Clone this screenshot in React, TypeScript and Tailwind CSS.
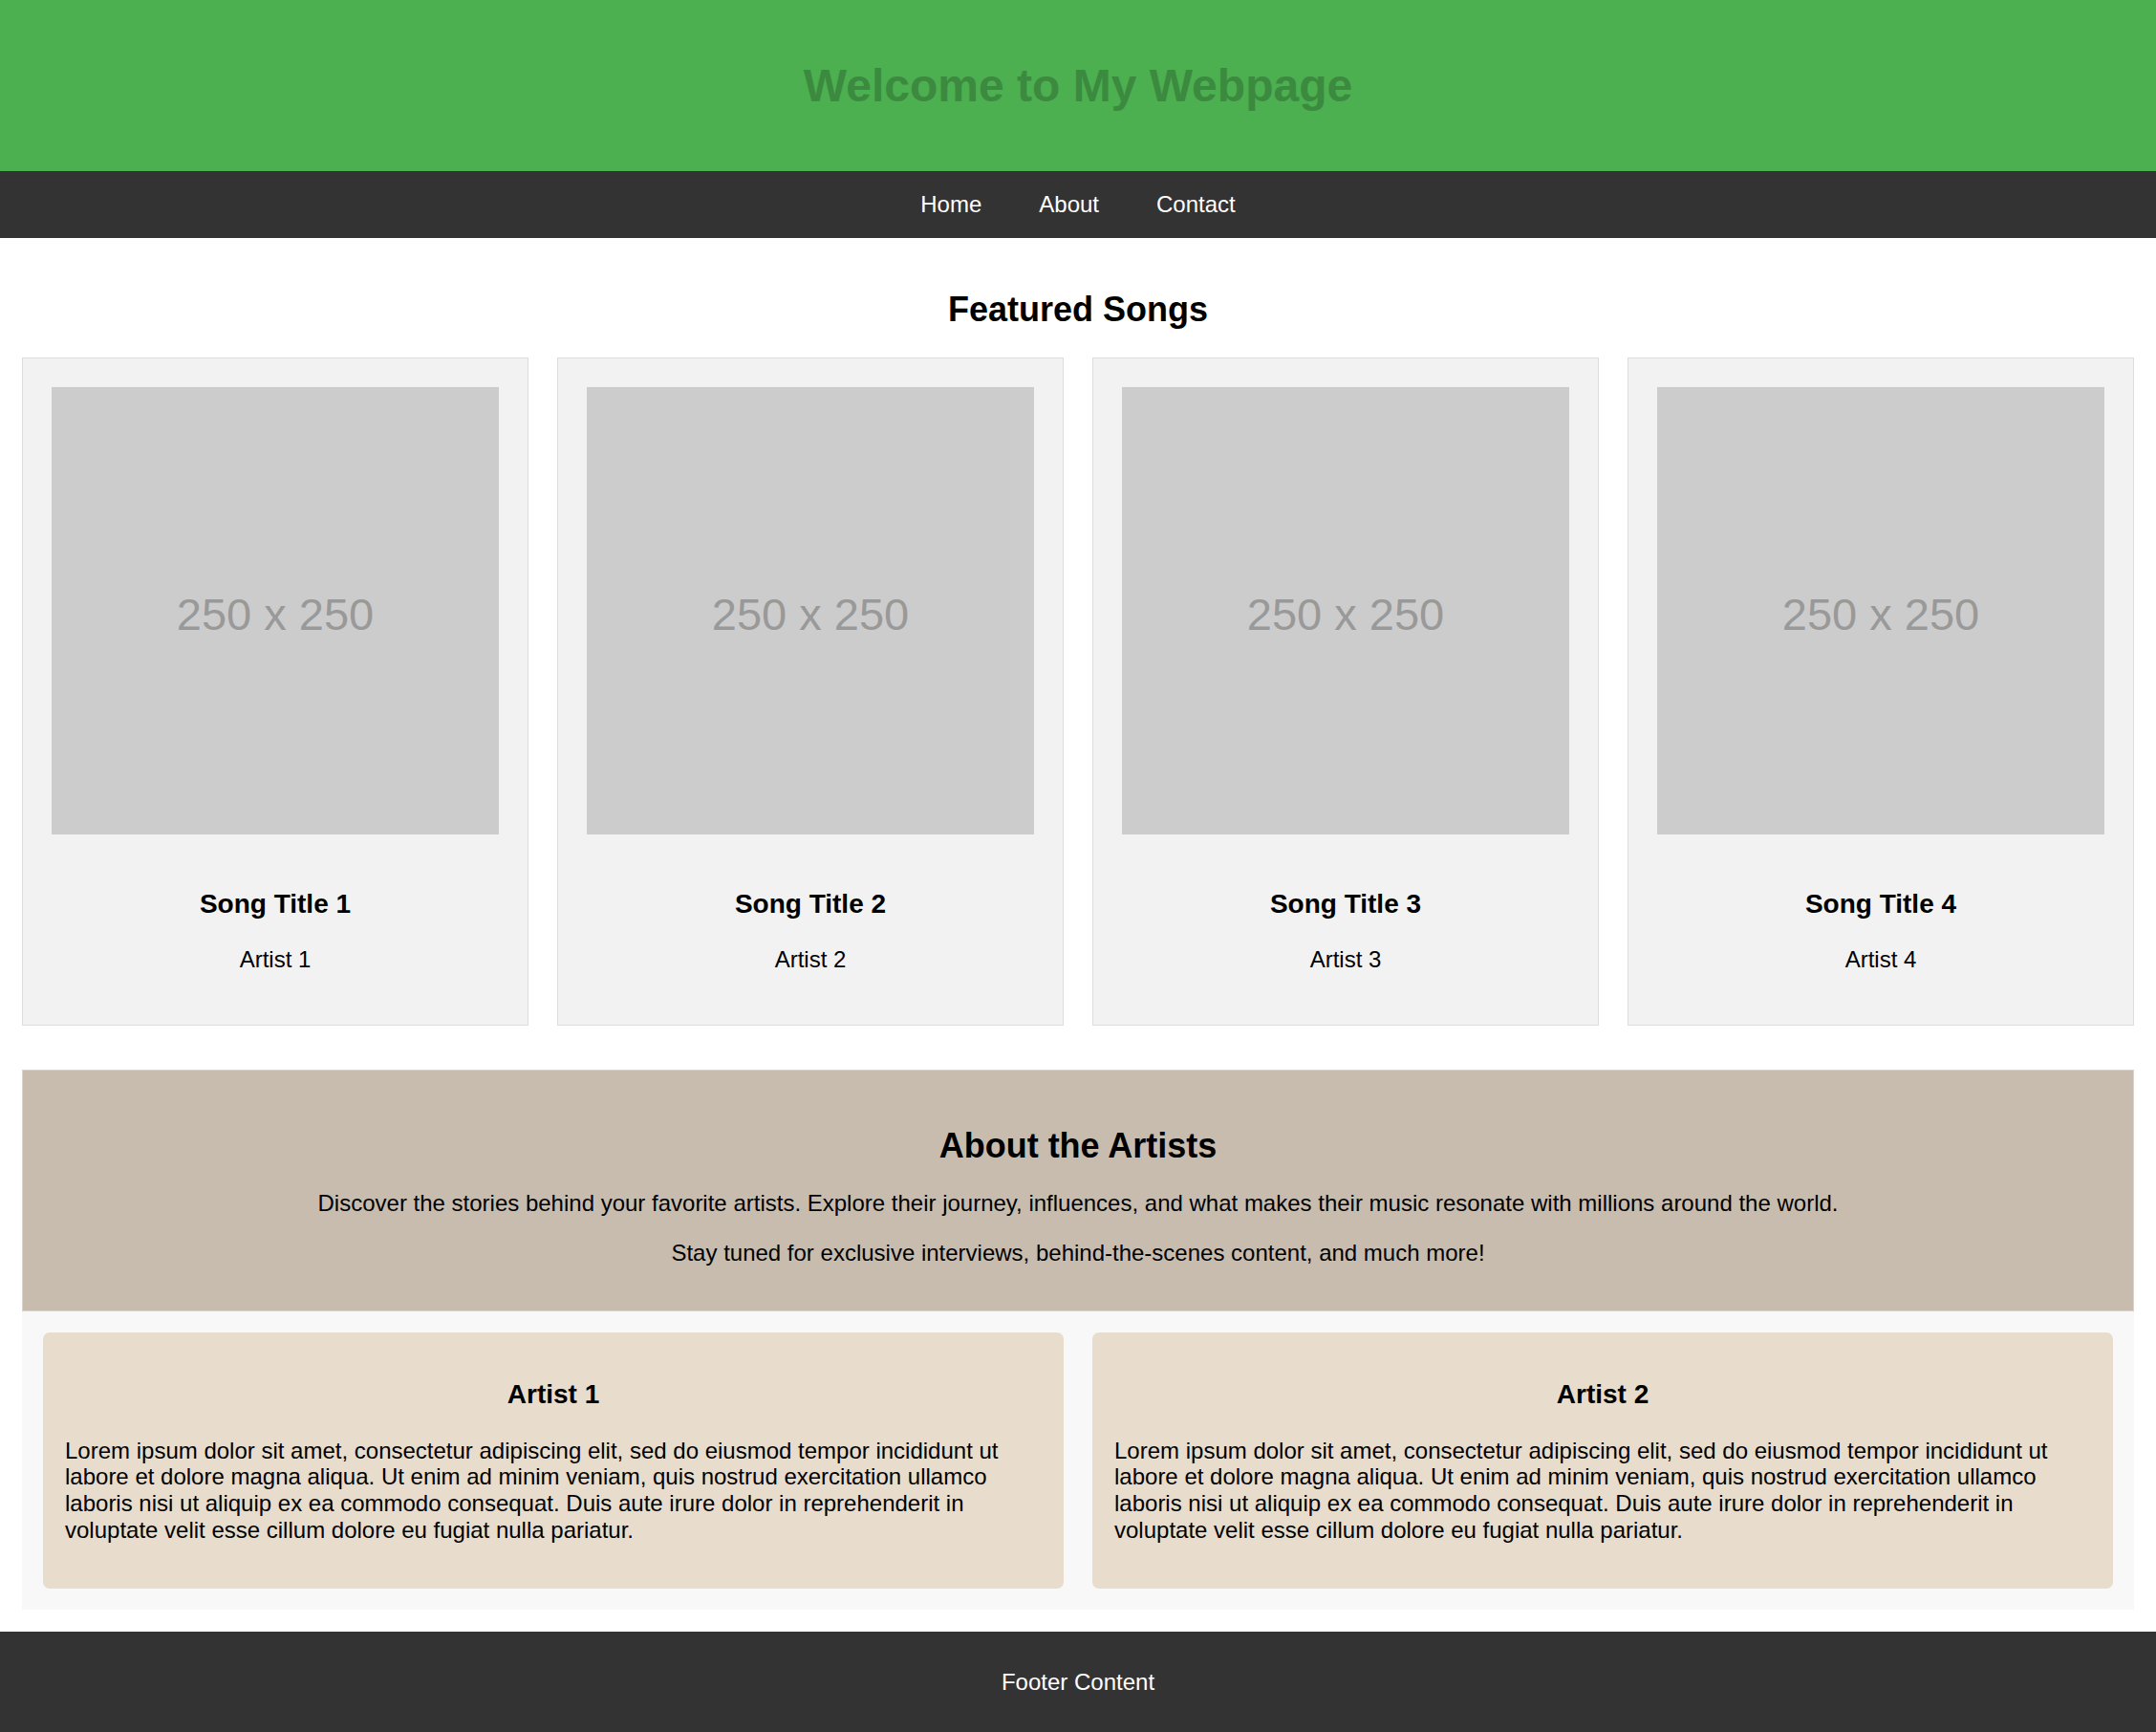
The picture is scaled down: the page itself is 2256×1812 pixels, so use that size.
const songs = [
  { title: 'Song Title 1', artist: 'Artist 1' },
  { title: 'Song Title 2', artist: 'Artist 2' },
  { title: 'Song Title 3', artist: 'Artist 3' },
  { title: 'Song Title 4', artist: 'Artist 4' },
]

const lorem =
  'Lorem ipsum dolor sit amet, consectetur adipiscing elit, sed do eiusmod tempor incididunt ut labore et dolore magna aliqua. Ut enim ad minim veniam, quis nostrud exercitation ullamco laboris nisi ut aliquip ex ea commodo consequat. Duis aute irure dolor in reprehenderit in voluptate velit esse cillum dolore eu fugiat nulla pariatur.'

function SongCard({ title, artist }: { title: string; artist: string }) {
  return (
    <div className="border border-[#ddd] bg-[#f2f2f2] px-[30px] pt-[30px] pb-[54px] text-center">
      {/* placeholder image */}
      <div className="flex h-[468px] w-full items-center justify-center bg-[#cccccc] pt-[6px] text-[47px] leading-none text-[#999]">
        250 x 250
      </div>
      <h3 className="mt-[57px] text-[28px] font-bold leading-[32px]">{title}</h3>
      <p className="mt-[28px] text-[24px] leading-[1.15]">{artist}</p>
    </div>
  )
}

function ArtistCard({ name }: { name: string }) {
  return (
    <div className="rounded-[7px] bg-[#e8dccc] px-[23px] pt-[49px] pb-[48px]">
      <h3 className="text-center text-[28px] font-bold leading-[32px]">{name}</h3>
      <p className="mt-[29px] text-[24px] leading-[1.15]">{lorem}</p>
    </div>
  )
}

export default function App() {
  return (
    <div className="min-h-[1812px] bg-white font-['Liberation_Sans',Arial,sans-serif] text-black">
      {/* ── HEADER ── */}
      <header className="flex h-[179px] items-center justify-center bg-[#4caf50]">
        <h1 className="text-[48px] font-bold leading-none text-[#3c8a3f]">Welcome to My Webpage</h1>
      </header>

      {/* ── NAV ── */}
      <nav className="flex h-[70px] items-center justify-center gap-[60px] bg-[#333] text-[24px] text-white">
        <a href="#">Home</a>
        <a href="#">About</a>
        <a href="#">Contact</a>
      </nav>

      {/* ── FEATURED SONGS ── */}
      <section className="px-[23px] pt-[54px]">
        <h2 className="text-center text-[36px] font-bold leading-[41px]">Featured Songs</h2>
        <div className="mt-[30px] grid grid-cols-4 gap-[30px]">
          {songs.map((s) => (
            <SongCard key={s.title} title={s.title} artist={s.artist} />
          ))}
        </div>
      </section>

      {/* ── ABOUT ── */}
      <section className="mx-[23px] mt-[46px]">
        <div className="border border-[#dcd4ca] bg-[#c8bcae] pt-[58px] pb-[46px] text-center">
          <h2 className="text-[36px] font-bold leading-[41px]">About the Artists</h2>
          <p className="mt-[26px] text-[24px] leading-[1.15]">
            Discover the stories behind your favorite artists. Explore their journey, influences, and what makes their music resonate with millions around the world.
          </p>
          <p className="mt-[25px] text-[24px] leading-[1.15]">
            Stay tuned for exclusive interviews, behind-the-scenes content, and much more!
          </p>
        </div>
        <div className="grid grid-cols-2 gap-[30px] bg-[#f8f8f8] p-[22px]">
          <ArtistCard name="Artist 1" />
          <ArtistCard name="Artist 2" />
        </div>
      </section>

      {/* ── FOOTER ── */}
      <footer className="mt-[23px] flex h-[105px] items-center justify-center bg-[#333] text-[24px] text-white">
        Footer Content
      </footer>
    </div>
  )
}
